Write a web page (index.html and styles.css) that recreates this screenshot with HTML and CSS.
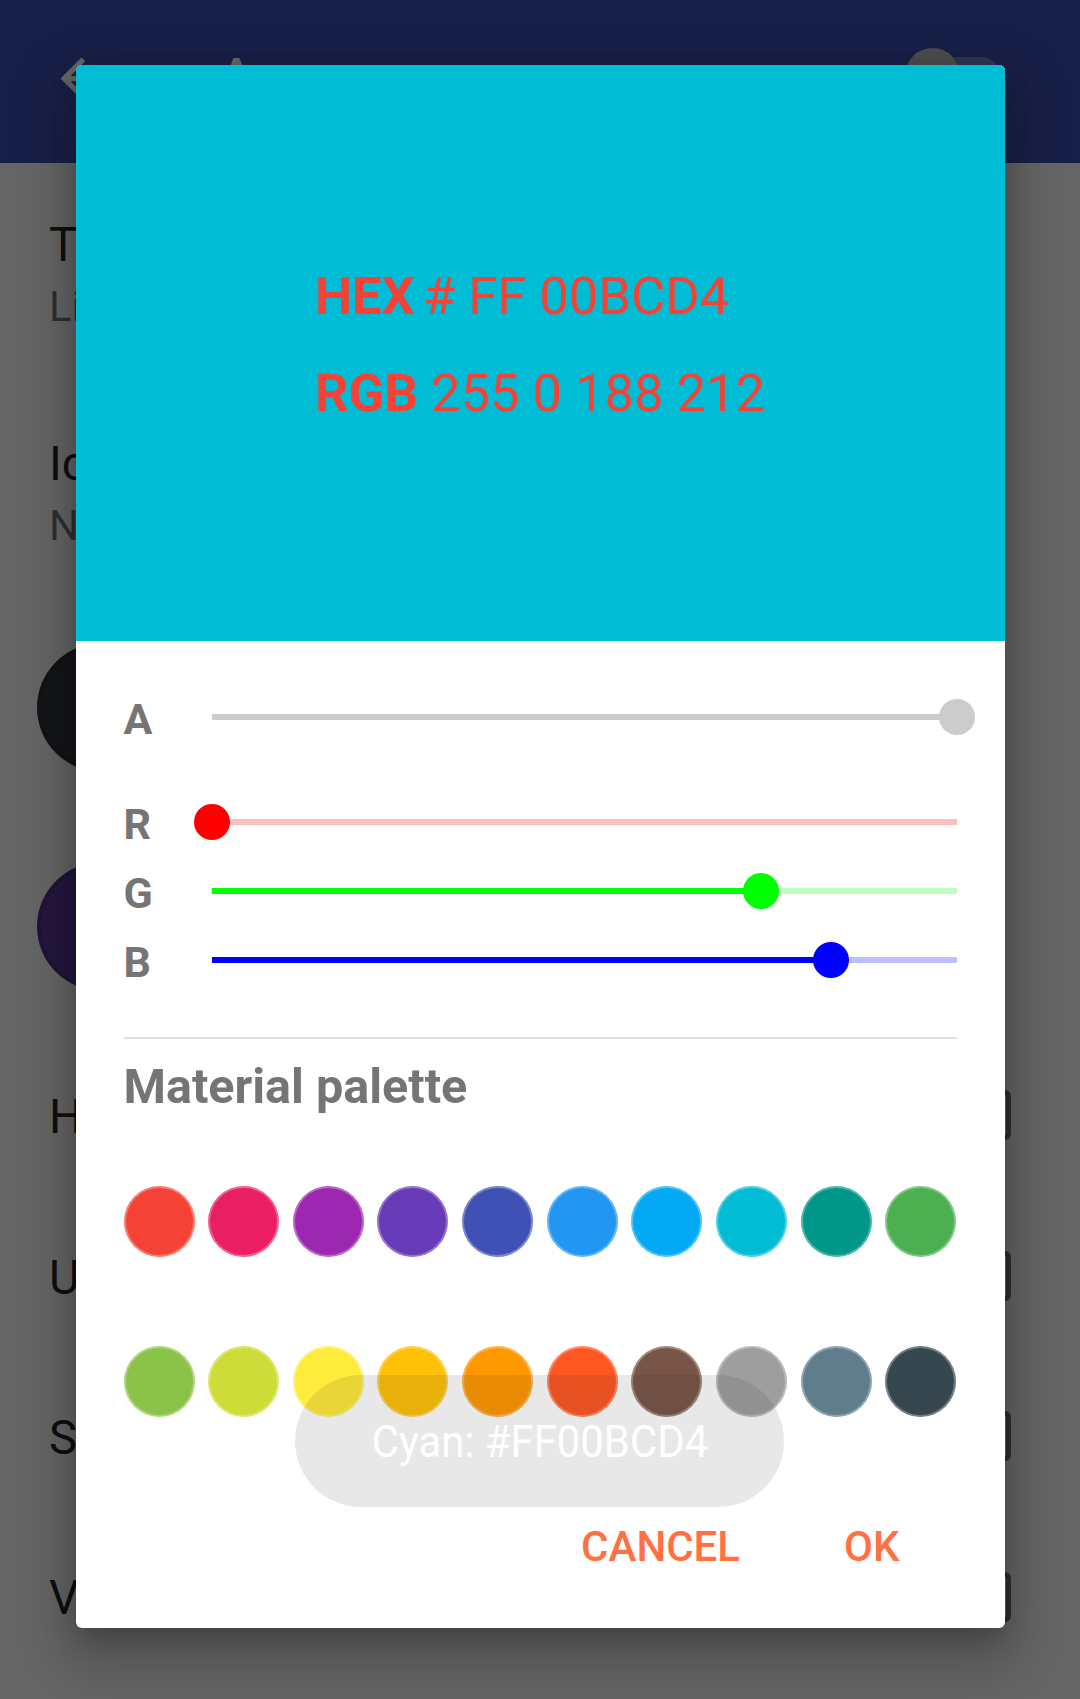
FILE: index.html
```html
<!DOCTYPE html>
<html lang="en">
<head>
<meta charset="utf-8">
<title>Color picker</title>
<link rel="stylesheet" href="styles.css">
</head>
<body>
  <header class="appbar">
    <svg class="back" viewBox="0 0 24 24"><path d="M20 11H7.83l5.59-5.59L12 4l-8 8 8 8 1.41-1.41L7.83 13H20v-2z"/></svg>
    <div class="app-title">Appearance</div>
    <div class="switch"><span class="switch-track"></span><span class="switch-thumb"></span></div>
  </header>

  <main class="list">
    <div class="item">
      <div class="item-title">Theme</div>
      <div class="item-sub">Light</div>
    </div>
    <div class="item item-2">
      <div class="item-title">Icons</div>
      <div class="item-sub">None</div>
    </div>
    <div class="color-dot dot-dark"></div>
    <div class="color-dot dot-purple"></div>
    <div class="check-row first"><span class="item-title">Hide</span><span class="checkbox"></span></div>
    <div class="check-row"><span class="item-title">Use</span><span class="checkbox"></span></div>
    <div class="check-row"><span class="item-title">Sort</span><span class="checkbox"></span></div>
    <div class="check-row"><span class="item-title">Vibrate</span><span class="checkbox"></span></div>
  </main>

  <div class="scrim">
    <div class="dialog">
      <div class="preview">
        <div class="codes">
          <div class="code-line"><span class="key hex">HEX</span><span># FF 00BCD4</span></div>
          <div class="code-line"><span class="key rgb">RGB</span><span>255 0 188 212</span></div>
        </div>
      </div>
      <div class="body">
        <div class="slider-row alpha ch-a">
          <span class="label">A</span>
          <div class="track" style="--p:100%"><span class="thumb"></span></div>
        </div>
        <div class="slider-row ch-r">
          <span class="label">R</span>
          <div class="track" style="--p:0%"><span class="thumb"></span></div>
        </div>
        <div class="slider-row ch-g">
          <span class="label">G</span>
          <div class="track" style="--p:73.7%"><span class="thumb"></span></div>
        </div>
        <div class="slider-row ch-b">
          <span class="label">B</span>
          <div class="track" style="--p:83.1%"><span class="thumb"></span></div>
        </div>

        <div class="divider"></div>
        <h2 class="palette-title">Material palette</h2>

        <div class="swatches">
          <span class="sw" style="background:#F44336"></span>
          <span class="sw" style="background:#E91E63"></span>
          <span class="sw" style="background:#9C27B0"></span>
          <span class="sw" style="background:#673AB7"></span>
          <span class="sw" style="background:#3F51B5"></span>
          <span class="sw" style="background:#2196F3"></span>
          <span class="sw" style="background:#03A9F4"></span>
          <span class="sw" style="background:#00BCD4"></span>
          <span class="sw" style="background:#009688"></span>
          <span class="sw" style="background:#4CAF50"></span>
        </div>
        <div class="swatches second">
          <span class="sw" style="background:#8BC34A"></span>
          <span class="sw" style="background:#CDDC39"></span>
          <span class="sw" style="background:#FFEB3B"></span>
          <span class="sw" style="background:#FFC107"></span>
          <span class="sw" style="background:#FF9800"></span>
          <span class="sw" style="background:#FF5722"></span>
          <span class="sw" style="background:#795548"></span>
          <span class="sw" style="background:#9E9E9E"></span>
          <span class="sw" style="background:#607D8B"></span>
          <span class="sw" style="background:#37474F"></span>
        </div>

        <div class="actions">
          <button class="btn">CANCEL</button>
          <button class="btn">OK</button>
        </div>
      </div>
    </div>

    <div class="toast"><span class="toast-text">Cyan: #FF00BCD4</span></div>
  </div>
</body>
</html>
```
FILE: styles.css
```css
* { box-sizing: border-box; margin: 0; padding: 0; }

html, body {
  width: 1080px;
  height: 1699px;
  overflow: hidden;
}

body {
  position: relative;
  background: #ffffff;
  font-family: Roboto, "Noto Sans", sans-serif;
}

/* ---------- background screen ---------- */
.appbar {
  height: 163px;
  background: #3F51B5;
  color: #ffffff;
  display: flex;
  align-items: flex-start;
  padding: 47px 80px 0 50px;
}

.back {
  width: 63px;
  height: 63px;
  fill: #ffffff;
  flex: none;
}

.app-title {
  margin-left: 106px;
  font-size: 52.5px;
  font-weight: 500;
  line-height: 61.5px;
}

.switch {
  margin-left: auto;
  position: relative;
  width: 95px;
  height: 55px;
  margin-top: 1px;
}

.switch-track {
  position: absolute;
  right: 0;
  top: 9px;
  width: 89px;
  height: 37px;
  border-radius: 19px;
  background: rgba(255, 255, 255, 0.3);
}

.switch-thumb {
  position: absolute;
  left: 0;
  top: 0;
  width: 55px;
  height: 55px;
  border-radius: 50%;
  background: #bdbdbd;
  box-shadow: 0 2px 5px rgba(0, 0, 0, 0.35);
}

.list {
  display: flex;
  flex-direction: column;
  padding: 55px 69px 0 49px;
}

.item-title {
  font-size: 47.25px;
  line-height: 55.4px;
  color: rgba(0, 0, 0, 0.87);
  white-space: nowrap;
}

.item-sub {
  margin-top: 8.5px;
  font-size: 42px;
  line-height: 49.2px;
  color: rgba(0, 0, 0, 0.54);
}

.item-2 { margin-top: 106px; }

.color-dot {
  width: 129px;
  height: 129px;
  border-radius: 50%;
  margin-left: -12px;
  border: 4px solid rgba(0, 0, 0, 0.12);
}

.dot-dark { margin-top: 93px; background: #34383F; }
.dot-purple { margin-top: 90px; background: #5B3A9E; }

.check-row {
  display: flex;
  justify-content: space-between;
  align-items: center;
  margin-top: 105px;
}

.check-row.first { margin-top: 99px; }

.checkbox {
  width: 50px;
  height: 50px;
  border: 5px solid rgba(0, 0, 0, 0.54);
  border-radius: 6px;
  margin-top: -5px;
}

/* ---------- scrim + dialog ---------- */
.scrim {
  position: absolute;
  inset: 0;
  background: rgba(0, 0, 0, 0.6);
  display: flex;
  justify-content: center;
  align-items: flex-start;
  padding-top: 65px;
}

.dialog {
  width: 929px;
  height: 1563px;
  background: #ffffff;
  border-radius: 6px;
  overflow: hidden;
  display: flex;
  flex-direction: column;
  box-shadow: 0 26px 60px 12px rgba(0, 0, 0, 0.22), 0 10px 24px rgba(0, 0, 0, 0.2);
}

.preview {
  height: 576px;
  flex: none;
  background: #00BCD4;
  display: flex;
  align-items: center;
  justify-content: center;
  padding-bottom: 16px;
}

.codes {
  color: #F44336;
  font-size: 52.5px;
  line-height: 97px;
}

.code-line { white-space: nowrap; }

.key { font-weight: 700; }
.key.hex { margin-right: 8px; }
.key.rgb { margin-right: 13px; }

.body {
  padding: 41.5px 48px 0;
  display: flex;
  flex-direction: column;
}

.slider-row {
  height: 69px;
  display: flex;
  align-items: center;
}

.slider-row.alpha { margin-bottom: 36px; }

.label {
  width: 88px;
  flex: none;
  margin-top: 5px;
  font-size: 43px;
  font-weight: 700;
  line-height: 43px;
  color: #757575;
}

.ch-a { --on: #cccccc; --off: #cccccc; }
.ch-r { --on: #ff0000; --off: rgba(255, 0, 0, 0.25); }
.ch-g { --on: #00ff00; --off: rgba(0, 255, 0, 0.25); }
.ch-b { --on: #0000ff; --off: rgba(0, 0, 255, 0.25); }

.track {
  flex: 1;
  height: 36px;
  position: relative;
}

.track::before {
  content: "";
  position: absolute;
  left: 0;
  right: 0;
  top: 15px;
  height: 6px;
  background: linear-gradient(to right, var(--on) 0, var(--on) var(--p), var(--off) var(--p), var(--off) 100%);
}

.thumb {
  position: absolute;
  top: 0;
  left: var(--p);
  width: 36px;
  height: 36px;
  margin-left: -18px;
  border-radius: 50%;
  background: var(--on);
}

.divider {
  margin-top: 42.5px;
  height: 2px;
  background: #e0e0e0;
}

.palette-title {
  margin-top: 17.7px;
  font-size: 48.5px;
  font-weight: 700;
  line-height: 60px;
  color: #757575;
}

.swatches {
  margin-top: 69px;
  display: flex;
  justify-content: space-between;
}

.swatches.second { margin-top: 89px; }

.sw {
  width: 71px;
  height: 71px;
  border-radius: 50%;
  box-shadow: inset 0 0 0 2px rgba(255, 255, 255, 0.3);
}

.actions {
  margin-top: 105.6px;
  display: flex;
  justify-content: flex-end;
  gap: 56px;
  padding-right: 33px;
}

.btn {
  border: 0;
  background: transparent;
  padding: 0 24px;
  font-family: Roboto, "Noto Sans", sans-serif;
  font-size: 42px;
  font-weight: 500;
  line-height: 49.2px;
  color: #FF7043;
}

.toast {
  position: absolute;
  left: 295px;
  top: 1375px;
  width: 489px;
  height: 132px;
  border-radius: 66px;
  background: rgba(50, 50, 50, 0.11);
  display: flex;
  align-items: center;
  justify-content: center;
}

.toast-text {
  display: inline-block;
  color: #ffffff;
  font-size: 45px;
  line-height: 53px;
  transform: scaleX(0.93);
  white-space: nowrap;
}
```
